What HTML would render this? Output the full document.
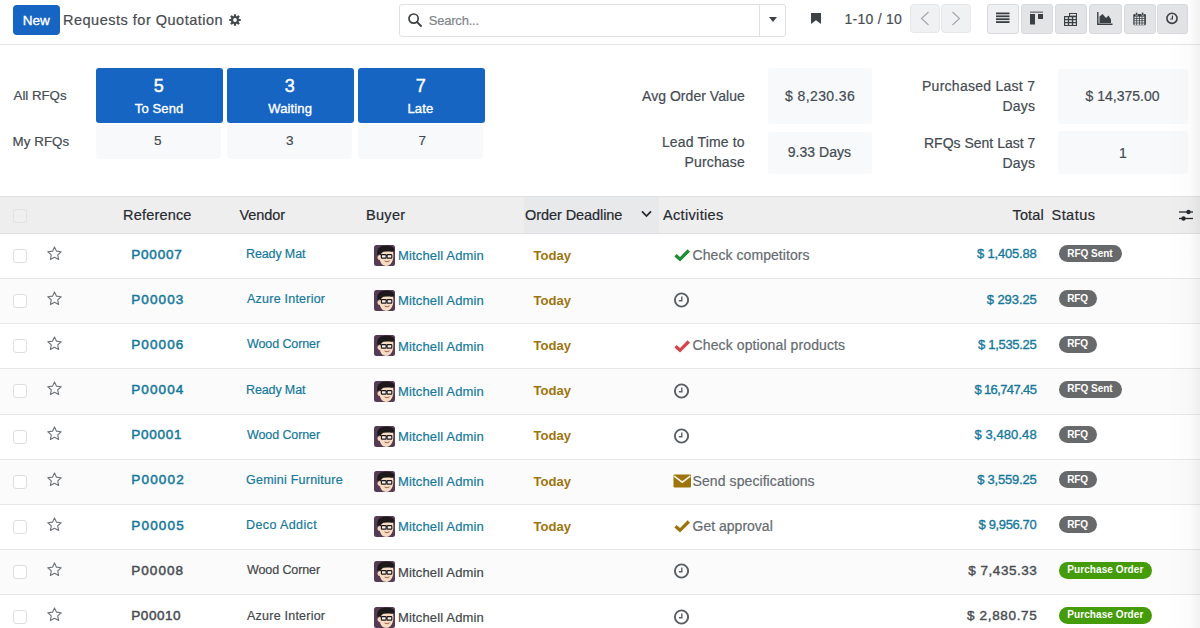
<!DOCTYPE html>
<html><head><meta charset="utf-8"><style>
html,body{margin:0;padding:0;width:1200px;height:628px;overflow:hidden;background:#fff}
.t{position:absolute;font-family:"Liberation Sans", sans-serif;line-height:1;white-space:nowrap;-webkit-text-stroke:0.2px currentColor}
</style></head><body>
<div style='position:absolute;left:13px;top:5px;width:47px;height:30px;background:#1765c3;border-radius:4px'></div><svg style='position:absolute;left:229px;top:13.5px' width='12' height='12' viewBox='0 0 12 12'><rect x='4.9' y='0.2' width='2.2' height='3' rx='.3' transform='rotate(0 6 6)' fill='#44494e'/><rect x='4.9' y='0.2' width='2.2' height='3' rx='.3' transform='rotate(45 6 6)' fill='#44494e'/><rect x='4.9' y='0.2' width='2.2' height='3' rx='.3' transform='rotate(90 6 6)' fill='#44494e'/><rect x='4.9' y='0.2' width='2.2' height='3' rx='.3' transform='rotate(135 6 6)' fill='#44494e'/><rect x='4.9' y='0.2' width='2.2' height='3' rx='.3' transform='rotate(180 6 6)' fill='#44494e'/><rect x='4.9' y='0.2' width='2.2' height='3' rx='.3' transform='rotate(225 6 6)' fill='#44494e'/><rect x='4.9' y='0.2' width='2.2' height='3' rx='.3' transform='rotate(270 6 6)' fill='#44494e'/><rect x='4.9' y='0.2' width='2.2' height='3' rx='.3' transform='rotate(315 6 6)' fill='#44494e'/><circle cx='6' cy='6' r='4' fill='#44494e'/><circle cx='6' cy='6' r='1.9' fill='#fff'/></svg><div style='position:absolute;left:399px;top:4px;width:387px;height:33px;border:1px solid #dfe0e2;border-radius:3px;background:#fff;box-sizing:border-box'></div><div style='position:absolute;left:759px;top:5px;width:1px;height:31px;background:#dfe0e2'></div><svg style='position:absolute;left:408px;top:13px' width='14' height='14' viewBox='0 0 14 14'><circle cx='5.6' cy='5.6' r='4.6' fill='none' stroke='#3d4247' stroke-width='1.7'/><line x1='9' y1='9' x2='13' y2='13' stroke='#3d4247' stroke-width='1.8' stroke-linecap='round'/></svg><svg style='position:absolute;left:769px;top:17px' width='8' height='5' viewBox='0 0 8 5'><path d='M0 0 L8 0 L4 5 Z' fill='#3d4247'/></svg><svg style='position:absolute;left:811px;top:13px' width='10' height='11' viewBox='0 0 10 11'><path d='M0 0 H10 V11 L5 7.2 L0 11 Z' fill='#3d4247'/></svg><div style='position:absolute;left:910px;top:4px;width:30px;height:29px;background:#f0f1f2;border:1px solid #e6e7e8;border-radius:4px;box-sizing:border-box'></div><div style='position:absolute;left:941px;top:4px;width:30px;height:29px;background:#f0f1f2;border:1px solid #e6e7e8;border-radius:4px;box-sizing:border-box'></div><svg style='position:absolute;left:920px;top:11px' width='10' height='15' viewBox='0 0 10 15'><polyline points='8.5,1 1.5,7.5 8.5,14' fill='none' stroke='#a3a7ab' stroke-width='1.15'/></svg><svg style='position:absolute;left:951px;top:11px' width='10' height='15' viewBox='0 0 10 15'><polyline points='1.5,1 8.5,7.5 1.5,14' fill='none' stroke='#a3a7ab' stroke-width='1.15'/></svg><div style='position:absolute;left:987px;top:4px;width:32px;height:30px;background:#eff0f1;border:1px solid #d8dadd;border-radius:3px;box-sizing:border-box'></div><div style='position:absolute;left:1021px;top:4px;width:32px;height:30px;background:#e2e4e6;border:1px solid #d8dadd;border-radius:3px;box-sizing:border-box'></div><div style='position:absolute;left:1055px;top:4px;width:32px;height:30px;background:#e2e4e6;border:1px solid #d8dadd;border-radius:3px;box-sizing:border-box'></div><div style='position:absolute;left:1089px;top:4px;width:33px;height:30px;background:#e2e4e6;border:1px solid #d8dadd;border-radius:3px;box-sizing:border-box'></div><div style='position:absolute;left:1124px;top:4px;width:32px;height:30px;background:#e2e4e6;border:1px solid #d8dadd;border-radius:3px;box-sizing:border-box'></div><div style='position:absolute;left:1157px;top:4px;width:31px;height:30px;background:#e2e4e6;border:1px solid #d8dadd;border-radius:3px;box-sizing:border-box'></div><svg style='position:absolute;left:996px;top:12px' width='14' height='12' viewBox='0 0 14 12'><rect x='0' y='0.5' width='13.5' height='1.8' fill='#3a3f44'/><rect x='0' y='3.4' width='13.5' height='1.8' fill='#3a3f44'/><rect x='0' y='6.3' width='13.5' height='1.8' fill='#3a3f44'/><rect x='0' y='9.2' width='13.5' height='1.8' fill='#3a3f44'/></svg><svg style='position:absolute;left:1030px;top:11px' width='14' height='14' viewBox='0 0 14 14'><rect x='0' y='0.5' width='13' height='1.3' fill='#3a3f44' opacity='.7'/><rect x='0' y='3' width='5' height='10.5' fill='#3a3f44'/><rect x='8' y='3' width='5' height='5' fill='#3a3f44'/></svg><svg style='position:absolute;left:1064px;top:12px' width='14' height='14' viewBox='0 0 14 14'><path d='M5 1 H13 V14 H0 V4 H5 Z' fill='#3a3f44'/><rect x='1.2' y='5.2' width='2.6' height='1.8' fill='#e2e4e6'/><rect x='5.2' y='5.2' width='2.6' height='1.8' fill='#e2e4e6'/><rect x='9.2' y='5.2' width='2.6' height='1.8' fill='#e2e4e6'/><rect x='1.2' y='8.2' width='2.6' height='1.8' fill='#e2e4e6'/><rect x='5.2' y='8.2' width='2.6' height='1.8' fill='#e2e4e6'/><rect x='9.2' y='8.2' width='2.6' height='1.8' fill='#e2e4e6'/><rect x='1.2' y='11.2' width='2.6' height='1.8' fill='#e2e4e6'/><rect x='5.2' y='11.2' width='2.6' height='1.8' fill='#e2e4e6'/><rect x='9.2' y='11.2' width='2.6' height='1.8' fill='#e2e4e6'/><rect x='6' y='2' width='6' height='1.6' fill='#e2e4e6'/></svg><svg style='position:absolute;left:1097px;top:12px' width='16' height='13' viewBox='0 0 16 13'><path d='M0.8 0 V12.2 H15.5' fill='none' stroke='#3a3f44' stroke-width='1.4'/><path d='M2.5 11 V4.5 L5.5 2 L9 6 L11.5 3.5 L14 7.5 V11 Z' fill='#3a3f44'/></svg><svg style='position:absolute;left:1133px;top:11.5px' width='13' height='14' viewBox='0 0 13 14'><rect x='0.3' y='2' width='12.6' height='11.3' rx='1.2' fill='#3a3f44'/><rect x='2.6' y='0.3' width='2' height='3.4' rx='1' fill='#3a3f44' stroke='#e2e4e6' stroke-width='.6'/><rect x='8.6' y='0.3' width='2' height='3.4' rx='1' fill='#3a3f44' stroke='#e2e4e6' stroke-width='.6'/><rect x='1.5' y='4.6' width='1.85' height='1.55' fill='#e2e4e6'/><rect x='4.15' y='4.6' width='1.85' height='1.55' fill='#e2e4e6'/><rect x='6.8' y='4.6' width='1.85' height='1.55' fill='#e2e4e6'/><rect x='9.45' y='4.6' width='1.85' height='1.55' fill='#e2e4e6'/><rect x='1.5' y='6.85' width='1.85' height='1.55' fill='#e2e4e6'/><rect x='4.15' y='6.85' width='1.85' height='1.55' fill='#e2e4e6'/><rect x='6.8' y='6.85' width='1.85' height='1.55' fill='#e2e4e6'/><rect x='9.45' y='6.85' width='1.85' height='1.55' fill='#e2e4e6'/><rect x='1.5' y='9.1' width='1.85' height='1.55' fill='#e2e4e6'/><rect x='4.15' y='9.1' width='1.85' height='1.55' fill='#e2e4e6'/><rect x='6.8' y='9.1' width='1.85' height='1.55' fill='#e2e4e6'/><rect x='9.45' y='9.1' width='1.85' height='1.55' fill='#e2e4e6'/><rect x='1.5' y='11.35' width='1.85' height='1.55' fill='#e2e4e6'/><rect x='4.15' y='11.35' width='1.85' height='1.55' fill='#e2e4e6'/><rect x='6.8' y='11.35' width='1.85' height='1.55' fill='#e2e4e6'/><rect x='9.45' y='11.35' width='1.85' height='1.55' fill='#e2e4e6'/></svg><svg style='position:absolute;left:1165px;top:11px' width='14' height='14' viewBox='0 0 14 14'><circle cx='7' cy='7.3' r='5.1' fill='none' stroke='#3a3f44' stroke-width='1.6'/><path d='M7.4 4.6 V8 H5.2' fill='none' stroke='#3a3f44' stroke-width='1.2'/></svg><div style='position:absolute;left:0px;top:44px;width:1200px;height:1px;background:#e3e5e8'></div><div style='position:absolute;left:96px;top:68px;width:127px;height:55px;background:#1765c3;border-radius:3px'></div><div style='position:absolute;left:96px;top:124px;width:125px;height:35px;background:#f7f9fb;border-radius:4px'></div><div style='position:absolute;left:227px;top:68px;width:127px;height:55px;background:#1765c3;border-radius:3px'></div><div style='position:absolute;left:227px;top:124px;width:125px;height:35px;background:#f7f9fb;border-radius:4px'></div><div style='position:absolute;left:358px;top:68px;width:127px;height:55px;background:#1765c3;border-radius:3px'></div><div style='position:absolute;left:358px;top:124px;width:125px;height:35px;background:#f7f9fb;border-radius:4px'></div><div style='position:absolute;left:768px;top:68px;width:104px;height:56px;background:#f7f9fb;border-radius:3px'></div><div style='position:absolute;left:768px;top:132px;width:104px;height:42px;background:#f7f9fb;border-radius:3px'></div><div style='position:absolute;left:1058px;top:69px;width:130px;height:55px;background:#f7f9fb;border-radius:3px'></div><div style='position:absolute;left:1058px;top:131px;width:130px;height:43px;background:#f7f9fb;border-radius:3px'></div><div style='position:absolute;left:0px;top:196px;width:1200px;height:1px;background:#dee0e3'></div><div style='position:absolute;left:0px;top:197px;width:1200px;height:36px;background:#eeeeef'></div><div style='position:absolute;left:524px;top:197px;width:135px;height:36px;background:#e7e9eb'></div><div style='position:absolute;left:0px;top:233px;width:1200px;height:1px;background:#dee0e3'></div><div style='position:absolute;left:13px;top:209px;width:14px;height:14px;border:1px solid #e0e1e3;border-radius:3px;background:#efefef;box-sizing:border-box'></div><svg style='position:absolute;left:641px;top:210px' width='12' height='8' viewBox='0 0 12 8'><polyline points='1,1.3 5.5,6 10,1.3' fill='none' stroke='#262a2e' stroke-width='1.8'/></svg><svg style='position:absolute;left:1178px;top:208px' width='16' height='14' viewBox='0 0 16 14'><line x1='1' y1='4' x2='15' y2='4' stroke='#262a2e' stroke-width='1.3'/><line x1='1' y1='10.5' x2='15' y2='10.5' stroke='#262a2e' stroke-width='1.3'/><circle cx='10.5' cy='4' r='2.2' fill='#262a2e'/><circle cx='5.5' cy='10.5' r='2.2' fill='#262a2e'/></svg><div style='position:absolute;left:0px;top:278px;width:1200px;height:1px;background:#e6e7e8'></div><div style='position:absolute;left:13px;top:249px;width:14px;height:14px;border:1px solid #dcdee0;border-radius:3px;background:#fff;box-sizing:border-box'></div><svg style='position:absolute;left:47px;top:245.70000000000002px' width='15' height='15' viewBox='0 0 15 15'><polygon points='7.50,0.90 9.50,5.15 14.16,5.74 10.73,8.95 11.61,13.56 7.50,11.30 3.39,13.56 4.27,8.95 0.84,5.74 5.50,5.15' fill='none' stroke='#6f747a' stroke-width='1.1' stroke-linejoin='round'/></svg><svg style='position:absolute;left:374px;top:245px' width='21' height='21' viewBox='0 0 21 21'><defs><clipPath id='ac'><rect x='0' y='0' width='21' height='21' rx='2.5'/></clipPath></defs><g clip-path='url(#ac)'><rect x='0' y='0' width='21' height='21' fill='#563b55'/><ellipse cx='5.2' cy='12.6' rx='1.7' ry='2.3' fill='#f3d6bd'/><path d='M5.4 8 Q5.4 5.2 8.5 5 L16 4.8 Q19.6 5.4 19.4 10 Q19.4 16 16.6 19 Q13.5 21.8 10 20.6 Q6.5 19.2 5.6 14 Z' fill='#f6dcc3'/><path d='M3.2 10 Q2.6 3.6 7 1.6 Q12 -0.2 17 1.2 Q20.8 2.6 20.2 5.8 Q19 7.2 16 6.6 Q12.5 6.1 9.5 6.8 Q7.2 7.6 6.6 10.5 Q5.6 8.6 3.2 10 Z' fill='#1d191b'/><rect x='7.4' y='9.6' width='4.7' height='3.5' rx='.6' fill='#fbf3ea' stroke='#1d191b' stroke-width='1.15'/><rect x='13.1' y='9.6' width='4.7' height='3.5' rx='.6' fill='#fbf3ea' stroke='#1d191b' stroke-width='1.15'/><line x1='12.1' y1='10.6' x2='13.1' y2='10.6' stroke='#1d191b' stroke-width='1'/><path d='M10.6 16 Q13 17.7 15.6 15.8' fill='none' stroke='#9a5a48' stroke-width='.95'/></g></svg><svg style='position:absolute;left:673.5px;top:249px' width='17' height='13' viewBox='0 0 17 13'><path d='M1.5 6.2 L6 10.3 L14.8 1.5' fill='none' stroke='#1f8b35' stroke-width='3.3' stroke-linejoin='miter'/></svg><div style='position:absolute;left:1059.3px;top:245px;width:62.5px;height:16.5px;background:#68696b;border-radius:9px'></div><div style='position:absolute;left:0px;top:279px;width:1200px;height:44px;background:#fbfbfb'></div><div style='position:absolute;left:0px;top:323px;width:1200px;height:1px;background:#e6e7e8'></div><div style='position:absolute;left:13px;top:294px;width:14px;height:14px;border:1px solid #dcdee0;border-radius:3px;background:#fff;box-sizing:border-box'></div><svg style='position:absolute;left:47px;top:290.9px' width='15' height='15' viewBox='0 0 15 15'><polygon points='7.50,0.90 9.50,5.15 14.16,5.74 10.73,8.95 11.61,13.56 7.50,11.30 3.39,13.56 4.27,8.95 0.84,5.74 5.50,5.15' fill='none' stroke='#6f747a' stroke-width='1.1' stroke-linejoin='round'/></svg><svg style='position:absolute;left:374px;top:290px' width='21' height='21' viewBox='0 0 21 21'><defs><clipPath id='ac'><rect x='0' y='0' width='21' height='21' rx='2.5'/></clipPath></defs><g clip-path='url(#ac)'><rect x='0' y='0' width='21' height='21' fill='#563b55'/><ellipse cx='5.2' cy='12.6' rx='1.7' ry='2.3' fill='#f3d6bd'/><path d='M5.4 8 Q5.4 5.2 8.5 5 L16 4.8 Q19.6 5.4 19.4 10 Q19.4 16 16.6 19 Q13.5 21.8 10 20.6 Q6.5 19.2 5.6 14 Z' fill='#f6dcc3'/><path d='M3.2 10 Q2.6 3.6 7 1.6 Q12 -0.2 17 1.2 Q20.8 2.6 20.2 5.8 Q19 7.2 16 6.6 Q12.5 6.1 9.5 6.8 Q7.2 7.6 6.6 10.5 Q5.6 8.6 3.2 10 Z' fill='#1d191b'/><rect x='7.4' y='9.6' width='4.7' height='3.5' rx='.6' fill='#fbf3ea' stroke='#1d191b' stroke-width='1.15'/><rect x='13.1' y='9.6' width='4.7' height='3.5' rx='.6' fill='#fbf3ea' stroke='#1d191b' stroke-width='1.15'/><line x1='12.1' y1='10.6' x2='13.1' y2='10.6' stroke='#1d191b' stroke-width='1'/><path d='M10.6 16 Q13 17.7 15.6 15.8' fill='none' stroke='#9a5a48' stroke-width='.95'/></g></svg><svg style='position:absolute;left:673px;top:292px' width='16' height='16' viewBox='0 0 16 16'><circle cx='8.5' cy='8' r='6.6' fill='none' stroke='#5a5f64' stroke-width='1.9'/><path d='M8.8 4.4 V8.8 H5.9' fill='none' stroke='#5a5f64' stroke-width='1.4'/></svg><div style='position:absolute;left:1059.3px;top:290px;width:37.3px;height:16.5px;background:#68696b;border-radius:9px'></div><div style='position:absolute;left:0px;top:368px;width:1200px;height:1px;background:#e6e7e8'></div><div style='position:absolute;left:13px;top:339px;width:14px;height:14px;border:1px solid #dcdee0;border-radius:3px;background:#fff;box-sizing:border-box'></div><svg style='position:absolute;left:47px;top:336.09px' width='15' height='15' viewBox='0 0 15 15'><polygon points='7.50,0.90 9.50,5.15 14.16,5.74 10.73,8.95 11.61,13.56 7.50,11.30 3.39,13.56 4.27,8.95 0.84,5.74 5.50,5.15' fill='none' stroke='#6f747a' stroke-width='1.1' stroke-linejoin='round'/></svg><svg style='position:absolute;left:374px;top:335px' width='21' height='21' viewBox='0 0 21 21'><defs><clipPath id='ac'><rect x='0' y='0' width='21' height='21' rx='2.5'/></clipPath></defs><g clip-path='url(#ac)'><rect x='0' y='0' width='21' height='21' fill='#563b55'/><ellipse cx='5.2' cy='12.6' rx='1.7' ry='2.3' fill='#f3d6bd'/><path d='M5.4 8 Q5.4 5.2 8.5 5 L16 4.8 Q19.6 5.4 19.4 10 Q19.4 16 16.6 19 Q13.5 21.8 10 20.6 Q6.5 19.2 5.6 14 Z' fill='#f6dcc3'/><path d='M3.2 10 Q2.6 3.6 7 1.6 Q12 -0.2 17 1.2 Q20.8 2.6 20.2 5.8 Q19 7.2 16 6.6 Q12.5 6.1 9.5 6.8 Q7.2 7.6 6.6 10.5 Q5.6 8.6 3.2 10 Z' fill='#1d191b'/><rect x='7.4' y='9.6' width='4.7' height='3.5' rx='.6' fill='#fbf3ea' stroke='#1d191b' stroke-width='1.15'/><rect x='13.1' y='9.6' width='4.7' height='3.5' rx='.6' fill='#fbf3ea' stroke='#1d191b' stroke-width='1.15'/><line x1='12.1' y1='10.6' x2='13.1' y2='10.6' stroke='#1d191b' stroke-width='1'/><path d='M10.6 16 Q13 17.7 15.6 15.8' fill='none' stroke='#9a5a48' stroke-width='.95'/></g></svg><svg style='position:absolute;left:673.5px;top:340px' width='17' height='13' viewBox='0 0 17 13'><path d='M1.5 6.2 L6 10.3 L14.8 1.5' fill='none' stroke='#d3444f' stroke-width='3.3' stroke-linejoin='miter'/></svg><div style='position:absolute;left:1059.3px;top:336px;width:37.3px;height:16.5px;background:#68696b;border-radius:9px'></div><div style='position:absolute;left:0px;top:369px;width:1200px;height:45px;background:#fbfbfb'></div><div style='position:absolute;left:0px;top:414px;width:1200px;height:1px;background:#e6e7e8'></div><div style='position:absolute;left:13px;top:384px;width:14px;height:14px;border:1px solid #dcdee0;border-radius:3px;background:#fff;box-sizing:border-box'></div><svg style='position:absolute;left:47px;top:381.28px' width='15' height='15' viewBox='0 0 15 15'><polygon points='7.50,0.90 9.50,5.15 14.16,5.74 10.73,8.95 11.61,13.56 7.50,11.30 3.39,13.56 4.27,8.95 0.84,5.74 5.50,5.15' fill='none' stroke='#6f747a' stroke-width='1.1' stroke-linejoin='round'/></svg><svg style='position:absolute;left:374px;top:381px' width='21' height='21' viewBox='0 0 21 21'><defs><clipPath id='ac'><rect x='0' y='0' width='21' height='21' rx='2.5'/></clipPath></defs><g clip-path='url(#ac)'><rect x='0' y='0' width='21' height='21' fill='#563b55'/><ellipse cx='5.2' cy='12.6' rx='1.7' ry='2.3' fill='#f3d6bd'/><path d='M5.4 8 Q5.4 5.2 8.5 5 L16 4.8 Q19.6 5.4 19.4 10 Q19.4 16 16.6 19 Q13.5 21.8 10 20.6 Q6.5 19.2 5.6 14 Z' fill='#f6dcc3'/><path d='M3.2 10 Q2.6 3.6 7 1.6 Q12 -0.2 17 1.2 Q20.8 2.6 20.2 5.8 Q19 7.2 16 6.6 Q12.5 6.1 9.5 6.8 Q7.2 7.6 6.6 10.5 Q5.6 8.6 3.2 10 Z' fill='#1d191b'/><rect x='7.4' y='9.6' width='4.7' height='3.5' rx='.6' fill='#fbf3ea' stroke='#1d191b' stroke-width='1.15'/><rect x='13.1' y='9.6' width='4.7' height='3.5' rx='.6' fill='#fbf3ea' stroke='#1d191b' stroke-width='1.15'/><line x1='12.1' y1='10.6' x2='13.1' y2='10.6' stroke='#1d191b' stroke-width='1'/><path d='M10.6 16 Q13 17.7 15.6 15.8' fill='none' stroke='#9a5a48' stroke-width='.95'/></g></svg><svg style='position:absolute;left:673px;top:383px' width='16' height='16' viewBox='0 0 16 16'><circle cx='8.5' cy='8' r='6.6' fill='none' stroke='#5a5f64' stroke-width='1.9'/><path d='M8.8 4.4 V8.8 H5.9' fill='none' stroke='#5a5f64' stroke-width='1.4'/></svg><div style='position:absolute;left:1059.3px;top:381px;width:62.5px;height:16.5px;background:#68696b;border-radius:9px'></div><div style='position:absolute;left:0px;top:459px;width:1200px;height:1px;background:#e6e7e8'></div><div style='position:absolute;left:13px;top:430px;width:14px;height:14px;border:1px solid #dcdee0;border-radius:3px;background:#fff;box-sizing:border-box'></div><svg style='position:absolute;left:47px;top:426.46999999999997px' width='15' height='15' viewBox='0 0 15 15'><polygon points='7.50,0.90 9.50,5.15 14.16,5.74 10.73,8.95 11.61,13.56 7.50,11.30 3.39,13.56 4.27,8.95 0.84,5.74 5.50,5.15' fill='none' stroke='#6f747a' stroke-width='1.1' stroke-linejoin='round'/></svg><svg style='position:absolute;left:374px;top:426px' width='21' height='21' viewBox='0 0 21 21'><defs><clipPath id='ac'><rect x='0' y='0' width='21' height='21' rx='2.5'/></clipPath></defs><g clip-path='url(#ac)'><rect x='0' y='0' width='21' height='21' fill='#563b55'/><ellipse cx='5.2' cy='12.6' rx='1.7' ry='2.3' fill='#f3d6bd'/><path d='M5.4 8 Q5.4 5.2 8.5 5 L16 4.8 Q19.6 5.4 19.4 10 Q19.4 16 16.6 19 Q13.5 21.8 10 20.6 Q6.5 19.2 5.6 14 Z' fill='#f6dcc3'/><path d='M3.2 10 Q2.6 3.6 7 1.6 Q12 -0.2 17 1.2 Q20.8 2.6 20.2 5.8 Q19 7.2 16 6.6 Q12.5 6.1 9.5 6.8 Q7.2 7.6 6.6 10.5 Q5.6 8.6 3.2 10 Z' fill='#1d191b'/><rect x='7.4' y='9.6' width='4.7' height='3.5' rx='.6' fill='#fbf3ea' stroke='#1d191b' stroke-width='1.15'/><rect x='13.1' y='9.6' width='4.7' height='3.5' rx='.6' fill='#fbf3ea' stroke='#1d191b' stroke-width='1.15'/><line x1='12.1' y1='10.6' x2='13.1' y2='10.6' stroke='#1d191b' stroke-width='1'/><path d='M10.6 16 Q13 17.7 15.6 15.8' fill='none' stroke='#9a5a48' stroke-width='.95'/></g></svg><svg style='position:absolute;left:673px;top:428px' width='16' height='16' viewBox='0 0 16 16'><circle cx='8.5' cy='8' r='6.6' fill='none' stroke='#5a5f64' stroke-width='1.9'/><path d='M8.8 4.4 V8.8 H5.9' fill='none' stroke='#5a5f64' stroke-width='1.4'/></svg><div style='position:absolute;left:1059.3px;top:426px;width:37.3px;height:16.5px;background:#68696b;border-radius:9px'></div><div style='position:absolute;left:0px;top:460px;width:1200px;height:44px;background:#fbfbfb'></div><div style='position:absolute;left:0px;top:504px;width:1200px;height:1px;background:#e6e7e8'></div><div style='position:absolute;left:13px;top:475px;width:14px;height:14px;border:1px solid #dcdee0;border-radius:3px;background:#fff;box-sizing:border-box'></div><svg style='position:absolute;left:47px;top:471.65999999999997px' width='15' height='15' viewBox='0 0 15 15'><polygon points='7.50,0.90 9.50,5.15 14.16,5.74 10.73,8.95 11.61,13.56 7.50,11.30 3.39,13.56 4.27,8.95 0.84,5.74 5.50,5.15' fill='none' stroke='#6f747a' stroke-width='1.1' stroke-linejoin='round'/></svg><svg style='position:absolute;left:374px;top:471px' width='21' height='21' viewBox='0 0 21 21'><defs><clipPath id='ac'><rect x='0' y='0' width='21' height='21' rx='2.5'/></clipPath></defs><g clip-path='url(#ac)'><rect x='0' y='0' width='21' height='21' fill='#563b55'/><ellipse cx='5.2' cy='12.6' rx='1.7' ry='2.3' fill='#f3d6bd'/><path d='M5.4 8 Q5.4 5.2 8.5 5 L16 4.8 Q19.6 5.4 19.4 10 Q19.4 16 16.6 19 Q13.5 21.8 10 20.6 Q6.5 19.2 5.6 14 Z' fill='#f6dcc3'/><path d='M3.2 10 Q2.6 3.6 7 1.6 Q12 -0.2 17 1.2 Q20.8 2.6 20.2 5.8 Q19 7.2 16 6.6 Q12.5 6.1 9.5 6.8 Q7.2 7.6 6.6 10.5 Q5.6 8.6 3.2 10 Z' fill='#1d191b'/><rect x='7.4' y='9.6' width='4.7' height='3.5' rx='.6' fill='#fbf3ea' stroke='#1d191b' stroke-width='1.15'/><rect x='13.1' y='9.6' width='4.7' height='3.5' rx='.6' fill='#fbf3ea' stroke='#1d191b' stroke-width='1.15'/><line x1='12.1' y1='10.6' x2='13.1' y2='10.6' stroke='#1d191b' stroke-width='1'/><path d='M10.6 16 Q13 17.7 15.6 15.8' fill='none' stroke='#9a5a48' stroke-width='.95'/></g></svg><svg style='position:absolute;left:672.5px;top:474px' width='19' height='14' viewBox='0 0 19 14'><rect x='0.5' y='0.5' width='17.5' height='13' rx='1.3' fill='#9d740c'/><path d='M1.2 2.2 L9.25 8.2 L17.3 2.2' fill='none' stroke='#fbf6ea' stroke-width='1.5'/></svg><div style='position:absolute;left:1059.3px;top:471px;width:37.3px;height:16.5px;background:#68696b;border-radius:9px'></div><div style='position:absolute;left:0px;top:549px;width:1200px;height:1px;background:#e6e7e8'></div><div style='position:absolute;left:13px;top:520px;width:14px;height:14px;border:1px solid #dcdee0;border-radius:3px;background:#fff;box-sizing:border-box'></div><svg style='position:absolute;left:47px;top:516.85px' width='15' height='15' viewBox='0 0 15 15'><polygon points='7.50,0.90 9.50,5.15 14.16,5.74 10.73,8.95 11.61,13.56 7.50,11.30 3.39,13.56 4.27,8.95 0.84,5.74 5.50,5.15' fill='none' stroke='#6f747a' stroke-width='1.1' stroke-linejoin='round'/></svg><svg style='position:absolute;left:374px;top:516px' width='21' height='21' viewBox='0 0 21 21'><defs><clipPath id='ac'><rect x='0' y='0' width='21' height='21' rx='2.5'/></clipPath></defs><g clip-path='url(#ac)'><rect x='0' y='0' width='21' height='21' fill='#563b55'/><ellipse cx='5.2' cy='12.6' rx='1.7' ry='2.3' fill='#f3d6bd'/><path d='M5.4 8 Q5.4 5.2 8.5 5 L16 4.8 Q19.6 5.4 19.4 10 Q19.4 16 16.6 19 Q13.5 21.8 10 20.6 Q6.5 19.2 5.6 14 Z' fill='#f6dcc3'/><path d='M3.2 10 Q2.6 3.6 7 1.6 Q12 -0.2 17 1.2 Q20.8 2.6 20.2 5.8 Q19 7.2 16 6.6 Q12.5 6.1 9.5 6.8 Q7.2 7.6 6.6 10.5 Q5.6 8.6 3.2 10 Z' fill='#1d191b'/><rect x='7.4' y='9.6' width='4.7' height='3.5' rx='.6' fill='#fbf3ea' stroke='#1d191b' stroke-width='1.15'/><rect x='13.1' y='9.6' width='4.7' height='3.5' rx='.6' fill='#fbf3ea' stroke='#1d191b' stroke-width='1.15'/><line x1='12.1' y1='10.6' x2='13.1' y2='10.6' stroke='#1d191b' stroke-width='1'/><path d='M10.6 16 Q13 17.7 15.6 15.8' fill='none' stroke='#9a5a48' stroke-width='.95'/></g></svg><svg style='position:absolute;left:673.5px;top:520px' width='17' height='13' viewBox='0 0 17 13'><path d='M1.5 6.2 L6 10.3 L14.8 1.5' fill='none' stroke='#9d740c' stroke-width='3.3' stroke-linejoin='miter'/></svg><div style='position:absolute;left:1059.3px;top:516px;width:37.3px;height:16.5px;background:#68696b;border-radius:9px'></div><div style='position:absolute;left:0px;top:550px;width:1200px;height:44px;background:#fbfbfb'></div><div style='position:absolute;left:0px;top:594px;width:1200px;height:1px;background:#e6e7e8'></div><div style='position:absolute;left:13px;top:565px;width:14px;height:14px;border:1px solid #dcdee0;border-radius:3px;background:#fff;box-sizing:border-box'></div><svg style='position:absolute;left:47px;top:562.04px' width='15' height='15' viewBox='0 0 15 15'><polygon points='7.50,0.90 9.50,5.15 14.16,5.74 10.73,8.95 11.61,13.56 7.50,11.30 3.39,13.56 4.27,8.95 0.84,5.74 5.50,5.15' fill='none' stroke='#6f747a' stroke-width='1.1' stroke-linejoin='round'/></svg><svg style='position:absolute;left:374px;top:561px' width='21' height='21' viewBox='0 0 21 21'><defs><clipPath id='ac'><rect x='0' y='0' width='21' height='21' rx='2.5'/></clipPath></defs><g clip-path='url(#ac)'><rect x='0' y='0' width='21' height='21' fill='#563b55'/><ellipse cx='5.2' cy='12.6' rx='1.7' ry='2.3' fill='#f3d6bd'/><path d='M5.4 8 Q5.4 5.2 8.5 5 L16 4.8 Q19.6 5.4 19.4 10 Q19.4 16 16.6 19 Q13.5 21.8 10 20.6 Q6.5 19.2 5.6 14 Z' fill='#f6dcc3'/><path d='M3.2 10 Q2.6 3.6 7 1.6 Q12 -0.2 17 1.2 Q20.8 2.6 20.2 5.8 Q19 7.2 16 6.6 Q12.5 6.1 9.5 6.8 Q7.2 7.6 6.6 10.5 Q5.6 8.6 3.2 10 Z' fill='#1d191b'/><rect x='7.4' y='9.6' width='4.7' height='3.5' rx='.6' fill='#fbf3ea' stroke='#1d191b' stroke-width='1.15'/><rect x='13.1' y='9.6' width='4.7' height='3.5' rx='.6' fill='#fbf3ea' stroke='#1d191b' stroke-width='1.15'/><line x1='12.1' y1='10.6' x2='13.1' y2='10.6' stroke='#1d191b' stroke-width='1'/><path d='M10.6 16 Q13 17.7 15.6 15.8' fill='none' stroke='#9a5a48' stroke-width='.95'/></g></svg><svg style='position:absolute;left:673px;top:563px' width='16' height='16' viewBox='0 0 16 16'><circle cx='8.5' cy='8' r='6.6' fill='none' stroke='#5a5f64' stroke-width='1.9'/><path d='M8.8 4.4 V8.8 H5.9' fill='none' stroke='#5a5f64' stroke-width='1.4'/></svg><div style='position:absolute;left:1059.3px;top:562px;width:92.9px;height:16.5px;background:#449c0a;border-radius:9px'></div><div style='position:absolute;left:0px;top:640px;width:1200px;height:1px;background:#e6e7e8'></div><div style='position:absolute;left:13px;top:610px;width:14px;height:14px;border:1px solid #dcdee0;border-radius:3px;background:#fff;box-sizing:border-box'></div><svg style='position:absolute;left:47px;top:607.2299999999999px' width='15' height='15' viewBox='0 0 15 15'><polygon points='7.50,0.90 9.50,5.15 14.16,5.74 10.73,8.95 11.61,13.56 7.50,11.30 3.39,13.56 4.27,8.95 0.84,5.74 5.50,5.15' fill='none' stroke='#6f747a' stroke-width='1.1' stroke-linejoin='round'/></svg><svg style='position:absolute;left:374px;top:607px' width='21' height='21' viewBox='0 0 21 21'><defs><clipPath id='ac'><rect x='0' y='0' width='21' height='21' rx='2.5'/></clipPath></defs><g clip-path='url(#ac)'><rect x='0' y='0' width='21' height='21' fill='#563b55'/><ellipse cx='5.2' cy='12.6' rx='1.7' ry='2.3' fill='#f3d6bd'/><path d='M5.4 8 Q5.4 5.2 8.5 5 L16 4.8 Q19.6 5.4 19.4 10 Q19.4 16 16.6 19 Q13.5 21.8 10 20.6 Q6.5 19.2 5.6 14 Z' fill='#f6dcc3'/><path d='M3.2 10 Q2.6 3.6 7 1.6 Q12 -0.2 17 1.2 Q20.8 2.6 20.2 5.8 Q19 7.2 16 6.6 Q12.5 6.1 9.5 6.8 Q7.2 7.6 6.6 10.5 Q5.6 8.6 3.2 10 Z' fill='#1d191b'/><rect x='7.4' y='9.6' width='4.7' height='3.5' rx='.6' fill='#fbf3ea' stroke='#1d191b' stroke-width='1.15'/><rect x='13.1' y='9.6' width='4.7' height='3.5' rx='.6' fill='#fbf3ea' stroke='#1d191b' stroke-width='1.15'/><line x1='12.1' y1='10.6' x2='13.1' y2='10.6' stroke='#1d191b' stroke-width='1'/><path d='M10.6 16 Q13 17.7 15.6 15.8' fill='none' stroke='#9a5a48' stroke-width='.95'/></g></svg><svg style='position:absolute;left:673px;top:609px' width='16' height='16' viewBox='0 0 16 16'><circle cx='8.5' cy='8' r='6.6' fill='none' stroke='#5a5f64' stroke-width='1.9'/><path d='M8.8 4.4 V8.8 H5.9' fill='none' stroke='#5a5f64' stroke-width='1.4'/></svg><div style='position:absolute;left:1059.3px;top:607px;width:92.9px;height:16.5px;background:#449c0a;border-radius:9px'></div><div style='position:absolute;left:1165px;top:0px;width:35px;height:628px;background:linear-gradient(to right, rgba(0,0,0,0) 0%, rgba(0,0,0,0.012) 70%, rgba(0,0,0,0.05) 100%)'></div>
<div class=t style='left:22.68px;top:13.70px;font-size:13.5px;font-weight:400;color:#ffffff;letter-spacing:0.075px;-webkit-text-stroke:0.35px currentColor'>New</div>
<div class=t style='left:63.00px;top:13.30px;font-size:14.5px;font-weight:400;color:#474c51;letter-spacing:0.500px'>Requests for Quotation</div>
<div class=t style='left:428.80px;top:13.60px;font-size:13px;font-weight:400;color:#80868b;letter-spacing:-0.225px'>Search...</div>
<div class=t style='left:844.60px;top:11.75px;font-size:14px;font-weight:400;color:#494e53;letter-spacing:0.237px'>1-10 / 10</div>
<div class=t style='left:13.60px;top:89.00px;font-size:13.3px;font-weight:400;color:#444b52;letter-spacing:-0.029px'>All RFQs</div>
<div class=t style='left:12.60px;top:135.00px;font-size:13.3px;font-weight:400;color:#444b52;letter-spacing:0.067px'>My RFQs</div>
<div class=t style='left:153.70px;top:76.80px;font-size:18px;font-weight:400;color:#ffffff;letter-spacing:0.000px;-webkit-text-stroke:0.45px currentColor'>5</div>
<div class=t style='left:134.84px;top:102.00px;font-size:13px;font-weight:400;color:#ffffff;letter-spacing:0.120px;-webkit-text-stroke:0.35px currentColor'>To Send</div>
<div class=t style='left:154.00px;top:134.00px;font-size:13.5px;font-weight:400;color:#444b52;letter-spacing:0.000px'>5</div>
<div class=t style='left:284.70px;top:76.80px;font-size:18px;font-weight:400;color:#ffffff;letter-spacing:0.000px;-webkit-text-stroke:0.45px currentColor'>3</div>
<div class=t style='left:268.34px;top:102.00px;font-size:13px;font-weight:400;color:#ffffff;letter-spacing:0.120px;-webkit-text-stroke:0.35px currentColor'>Waiting</div>
<div class=t style='left:286.00px;top:134.00px;font-size:13.5px;font-weight:400;color:#444b52;letter-spacing:0.000px'>3</div>
<div class=t style='left:415.70px;top:76.80px;font-size:18px;font-weight:400;color:#ffffff;letter-spacing:0.000px;-webkit-text-stroke:0.45px currentColor'>7</div>
<div class=t style='left:407.52px;top:102.00px;font-size:13px;font-weight:400;color:#ffffff;letter-spacing:0.120px;-webkit-text-stroke:0.35px currentColor'>Late</div>
<div class=t style='left:418.50px;top:134.00px;font-size:13.5px;font-weight:400;color:#444b52;letter-spacing:0.000px'>7</div>
<div class=t style='left:642.00px;top:88.60px;font-size:14px;font-weight:400;color:#444b52;letter-spacing:0.043px'>Avg Order Value</div>
<div class=t style='left:661.95px;top:134.90px;font-size:14px;font-weight:400;color:#444b52;letter-spacing:0.150px'>Lead Time to</div>
<div class=t style='left:684.55px;top:155.30px;font-size:14px;font-weight:400;color:#444b52;letter-spacing:0.150px'>Purchase</div>
<div class=t style='left:785.00px;top:88.60px;font-size:14px;font-weight:400;color:#444b52;letter-spacing:0.400px'>$ 8,230.36</div>
<div class=t style='left:787.80px;top:144.90px;font-size:14px;font-weight:400;color:#444b52;letter-spacing:0.025px'>9.33 Days</div>
<div class=t style='left:922.00px;top:78.50px;font-size:14px;font-weight:400;color:#444b52;letter-spacing:0.267px'>Purchased Last 7</div>
<div class=t style='left:1002.55px;top:99.00px;font-size:14px;font-weight:400;color:#444b52;letter-spacing:0.150px'>Days</div>
<div class=t style='left:924.00px;top:135.50px;font-size:14px;font-weight:400;color:#444b52;letter-spacing:0.000px'>RFQs Sent Last 7</div>
<div class=t style='left:1002.55px;top:156.00px;font-size:14px;font-weight:400;color:#444b52;letter-spacing:0.150px'>Days</div>
<div class=t style='left:1085.50px;top:89.00px;font-size:14px;font-weight:400;color:#444b52;letter-spacing:0.000px'>$ 14,375.00</div>
<div class=t style='left:1119.00px;top:146.00px;font-size:14px;font-weight:400;color:#444b52;letter-spacing:0.000px'>1</div>
<div class=t style='left:123.00px;top:208.00px;font-size:14.5px;font-weight:400;color:#262a2e;letter-spacing:0.188px'>Reference</div>
<div class=t style='left:239.50px;top:208.00px;font-size:14.5px;font-weight:400;color:#262a2e;letter-spacing:-0.100px'>Vendor</div>
<div class=t style='left:366.00px;top:208.00px;font-size:14.5px;font-weight:400;color:#262a2e;letter-spacing:0.300px'>Buyer</div>
<div class=t style='left:525.00px;top:208.00px;font-size:14.5px;font-weight:400;color:#262a2e;letter-spacing:-0.077px'>Order Deadline</div>
<div class=t style='left:663.00px;top:208.00px;font-size:14.5px;font-weight:400;color:#262a2e;letter-spacing:0.333px'>Activities</div>
<div class=t style='left:1012.50px;top:208.00px;font-size:14.5px;font-weight:400;color:#262a2e;letter-spacing:0.125px'>Total</div>
<div class=t style='left:1051.50px;top:208.00px;font-size:14.5px;font-weight:400;color:#262a2e;letter-spacing:0.460px'>Status</div>
<div class=t style='left:131.25px;top:247.50px;font-size:13.5px;font-weight:400;color:#15789a;letter-spacing:0.800px;-webkit-text-stroke:0.5px currentColor'>P00007</div>
<div class=t style='left:246.00px;top:248.10px;font-size:12.5px;font-weight:400;color:#15789a;letter-spacing:-0.125px'>Ready Mat</div>
<div class=t style='left:398.00px;top:249.20px;font-size:13px;font-weight:400;color:#15789a;letter-spacing:0.154px'>Mitchell Admin</div>
<div class=t style='left:533.60px;top:248.60px;font-size:13px;font-weight:700;color:#9d740c;letter-spacing:0.000px;-webkit-text-stroke:0'>Today</div>
<div class=t style='left:692.60px;top:248.00px;font-size:14px;font-weight:400;color:#666b70;letter-spacing:0.062px'>Check competitors</div>
<div class=t style='left:977.08px;top:247.30px;font-size:13px;font-weight:400;color:#15789a;letter-spacing:-0.206px;-webkit-text-stroke:0.35px currentColor'>$ 1,405.88</div>
<div class=t style='left:1067.30px;top:248.80px;font-size:10px;font-weight:700;color:#ffffff;letter-spacing:-0.043px;-webkit-text-stroke:0'>RFQ Sent</div>
<div class=t style='left:131.25px;top:292.70px;font-size:13.5px;font-weight:400;color:#15789a;letter-spacing:1.100px;-webkit-text-stroke:0.5px currentColor'>P00003</div>
<div class=t style='left:247.00px;top:293.30px;font-size:12.5px;font-weight:400;color:#15789a;letter-spacing:0.231px'>Azure Interior</div>
<div class=t style='left:398.00px;top:294.40px;font-size:13px;font-weight:400;color:#15789a;letter-spacing:0.154px'>Mitchell Admin</div>
<div class=t style='left:533.60px;top:293.80px;font-size:13px;font-weight:700;color:#9d740c;letter-spacing:0.000px;-webkit-text-stroke:0'>Today</div>
<div class=t style='left:986.68px;top:292.50px;font-size:13px;font-weight:400;color:#15789a;letter-spacing:-0.064px;-webkit-text-stroke:0.35px currentColor'>$ 293.25</div>
<div class=t style='left:1067.30px;top:294.00px;font-size:10px;font-weight:700;color:#ffffff;letter-spacing:-0.250px;-webkit-text-stroke:0'>RFQ</div>
<div class=t style='left:131.25px;top:337.89px;font-size:13.5px;font-weight:400;color:#15789a;letter-spacing:1.100px;-webkit-text-stroke:0.5px currentColor'>P00006</div>
<div class=t style='left:247.00px;top:338.49px;font-size:12.5px;font-weight:400;color:#15789a;letter-spacing:-0.100px'>Wood Corner</div>
<div class=t style='left:398.00px;top:339.59px;font-size:13px;font-weight:400;color:#15789a;letter-spacing:0.154px'>Mitchell Admin</div>
<div class=t style='left:533.60px;top:338.99px;font-size:13px;font-weight:700;color:#9d740c;letter-spacing:0.000px;-webkit-text-stroke:0'>Today</div>
<div class=t style='left:692.60px;top:338.39px;font-size:14px;font-weight:400;color:#666b70;letter-spacing:0.100px'>Check optional products</div>
<div class=t style='left:978.08px;top:337.69px;font-size:13px;font-weight:400;color:#15789a;letter-spacing:-0.317px;-webkit-text-stroke:0.35px currentColor'>$ 1,535.25</div>
<div class=t style='left:1067.30px;top:339.19px;font-size:10px;font-weight:700;color:#ffffff;letter-spacing:-0.250px;-webkit-text-stroke:0'>RFQ</div>
<div class=t style='left:131.25px;top:383.08px;font-size:13.5px;font-weight:400;color:#15789a;letter-spacing:1.100px;-webkit-text-stroke:0.5px currentColor'>P00004</div>
<div class=t style='left:246.00px;top:383.68px;font-size:12.5px;font-weight:400;color:#15789a;letter-spacing:-0.125px'>Ready Mat</div>
<div class=t style='left:398.00px;top:384.78px;font-size:13px;font-weight:400;color:#15789a;letter-spacing:0.154px'>Mitchell Admin</div>
<div class=t style='left:533.60px;top:384.18px;font-size:13px;font-weight:700;color:#9d740c;letter-spacing:0.000px;-webkit-text-stroke:0'>Today</div>
<div class=t style='left:974.38px;top:382.88px;font-size:13px;font-weight:400;color:#15789a;letter-spacing:-0.615px;-webkit-text-stroke:0.35px currentColor'>$ 16,747.45</div>
<div class=t style='left:1067.30px;top:384.38px;font-size:10px;font-weight:700;color:#ffffff;letter-spacing:-0.043px;-webkit-text-stroke:0'>RFQ Sent</div>
<div class=t style='left:131.25px;top:428.27px;font-size:13.5px;font-weight:400;color:#15789a;letter-spacing:0.760px;-webkit-text-stroke:0.5px currentColor'>P00001</div>
<div class=t style='left:247.00px;top:428.87px;font-size:12.5px;font-weight:400;color:#15789a;letter-spacing:-0.100px'>Wood Corner</div>
<div class=t style='left:398.00px;top:429.97px;font-size:13px;font-weight:400;color:#15789a;letter-spacing:0.154px'>Mitchell Admin</div>
<div class=t style='left:533.60px;top:429.37px;font-size:13px;font-weight:700;color:#9d740c;letter-spacing:0.000px;-webkit-text-stroke:0'>Today</div>
<div class=t style='left:974.38px;top:428.07px;font-size:13px;font-weight:400;color:#15789a;letter-spacing:0.094px;-webkit-text-stroke:0.35px currentColor'>$ 3,480.48</div>
<div class=t style='left:1067.30px;top:429.57px;font-size:10px;font-weight:700;color:#ffffff;letter-spacing:-0.250px;-webkit-text-stroke:0'>RFQ</div>
<div class=t style='left:131.25px;top:473.46px;font-size:13.5px;font-weight:400;color:#15789a;letter-spacing:1.200px;-webkit-text-stroke:0.5px currentColor'>P00002</div>
<div class=t style='left:246.00px;top:474.06px;font-size:12.5px;font-weight:400;color:#15789a;letter-spacing:0.233px'>Gemini Furniture</div>
<div class=t style='left:398.00px;top:475.16px;font-size:13px;font-weight:400;color:#15789a;letter-spacing:0.154px'>Mitchell Admin</div>
<div class=t style='left:533.60px;top:474.56px;font-size:13px;font-weight:700;color:#9d740c;letter-spacing:0.000px;-webkit-text-stroke:0'>Today</div>
<div class=t style='left:692.60px;top:473.96px;font-size:14px;font-weight:400;color:#666b70;letter-spacing:0.078px'>Send specifications</div>
<div class=t style='left:977.18px;top:473.26px;font-size:13px;font-weight:400;color:#15789a;letter-spacing:-0.217px;-webkit-text-stroke:0.35px currentColor'>$ 3,559.25</div>
<div class=t style='left:1067.30px;top:474.76px;font-size:10px;font-weight:700;color:#ffffff;letter-spacing:-0.250px;-webkit-text-stroke:0'>RFQ</div>
<div class=t style='left:131.25px;top:518.65px;font-size:13.5px;font-weight:400;color:#15789a;letter-spacing:1.200px;-webkit-text-stroke:0.5px currentColor'>P00005</div>
<div class=t style='left:246.00px;top:519.25px;font-size:12.5px;font-weight:400;color:#15789a;letter-spacing:0.400px'>Deco Addict</div>
<div class=t style='left:398.00px;top:520.35px;font-size:13px;font-weight:400;color:#15789a;letter-spacing:0.154px'>Mitchell Admin</div>
<div class=t style='left:533.60px;top:519.75px;font-size:13px;font-weight:700;color:#9d740c;letter-spacing:0.000px;-webkit-text-stroke:0'>Today</div>
<div class=t style='left:692.60px;top:519.15px;font-size:14px;font-weight:400;color:#666b70;letter-spacing:0.000px'>Get approval</div>
<div class=t style='left:978.58px;top:518.45px;font-size:13px;font-weight:400;color:#15789a;letter-spacing:-0.372px;-webkit-text-stroke:0.35px currentColor'>$ 9,956.70</div>
<div class=t style='left:1067.30px;top:519.95px;font-size:10px;font-weight:700;color:#ffffff;letter-spacing:-0.250px;-webkit-text-stroke:0'>RFQ</div>
<div class=t style='left:131.25px;top:563.84px;font-size:13.5px;font-weight:400;color:#4a4e52;letter-spacing:1.040px;-webkit-text-stroke:0.5px currentColor'>P00008</div>
<div class=t style='left:247.00px;top:564.44px;font-size:12.5px;font-weight:400;color:#43474b;letter-spacing:-0.100px'>Wood Corner</div>
<div class=t style='left:398.00px;top:565.54px;font-size:13px;font-weight:400;color:#43474b;letter-spacing:0.154px'>Mitchell Admin</div>
<div class=t style='left:968.21px;top:563.84px;font-size:13.5px;font-weight:400;color:#4a4e52;letter-spacing:0.531px;-webkit-text-stroke:0.42px currentColor'>$ 7,435.33</div>
<div class=t style='left:1067.30px;top:565.14px;font-size:10px;font-weight:700;color:#ffffff;letter-spacing:0.077px;-webkit-text-stroke:0'>Purchase Order</div>
<div class=t style='left:131.25px;top:609.03px;font-size:13.5px;font-weight:400;color:#4a4e52;letter-spacing:0.560px;-webkit-text-stroke:0.5px currentColor'>P00010</div>
<div class=t style='left:247.00px;top:609.63px;font-size:12.5px;font-weight:400;color:#43474b;letter-spacing:0.231px'>Azure Interior</div>
<div class=t style='left:398.00px;top:610.73px;font-size:13px;font-weight:400;color:#43474b;letter-spacing:0.154px'>Mitchell Admin</div>
<div class=t style='left:966.91px;top:609.03px;font-size:13.5px;font-weight:400;color:#4a4e52;letter-spacing:0.676px;-webkit-text-stroke:0.42px currentColor'>$ 2,880.75</div>
<div class=t style='left:1067.30px;top:610.33px;font-size:10px;font-weight:700;color:#ffffff;letter-spacing:0.077px;-webkit-text-stroke:0'>Purchase Order</div>
</body></html>
